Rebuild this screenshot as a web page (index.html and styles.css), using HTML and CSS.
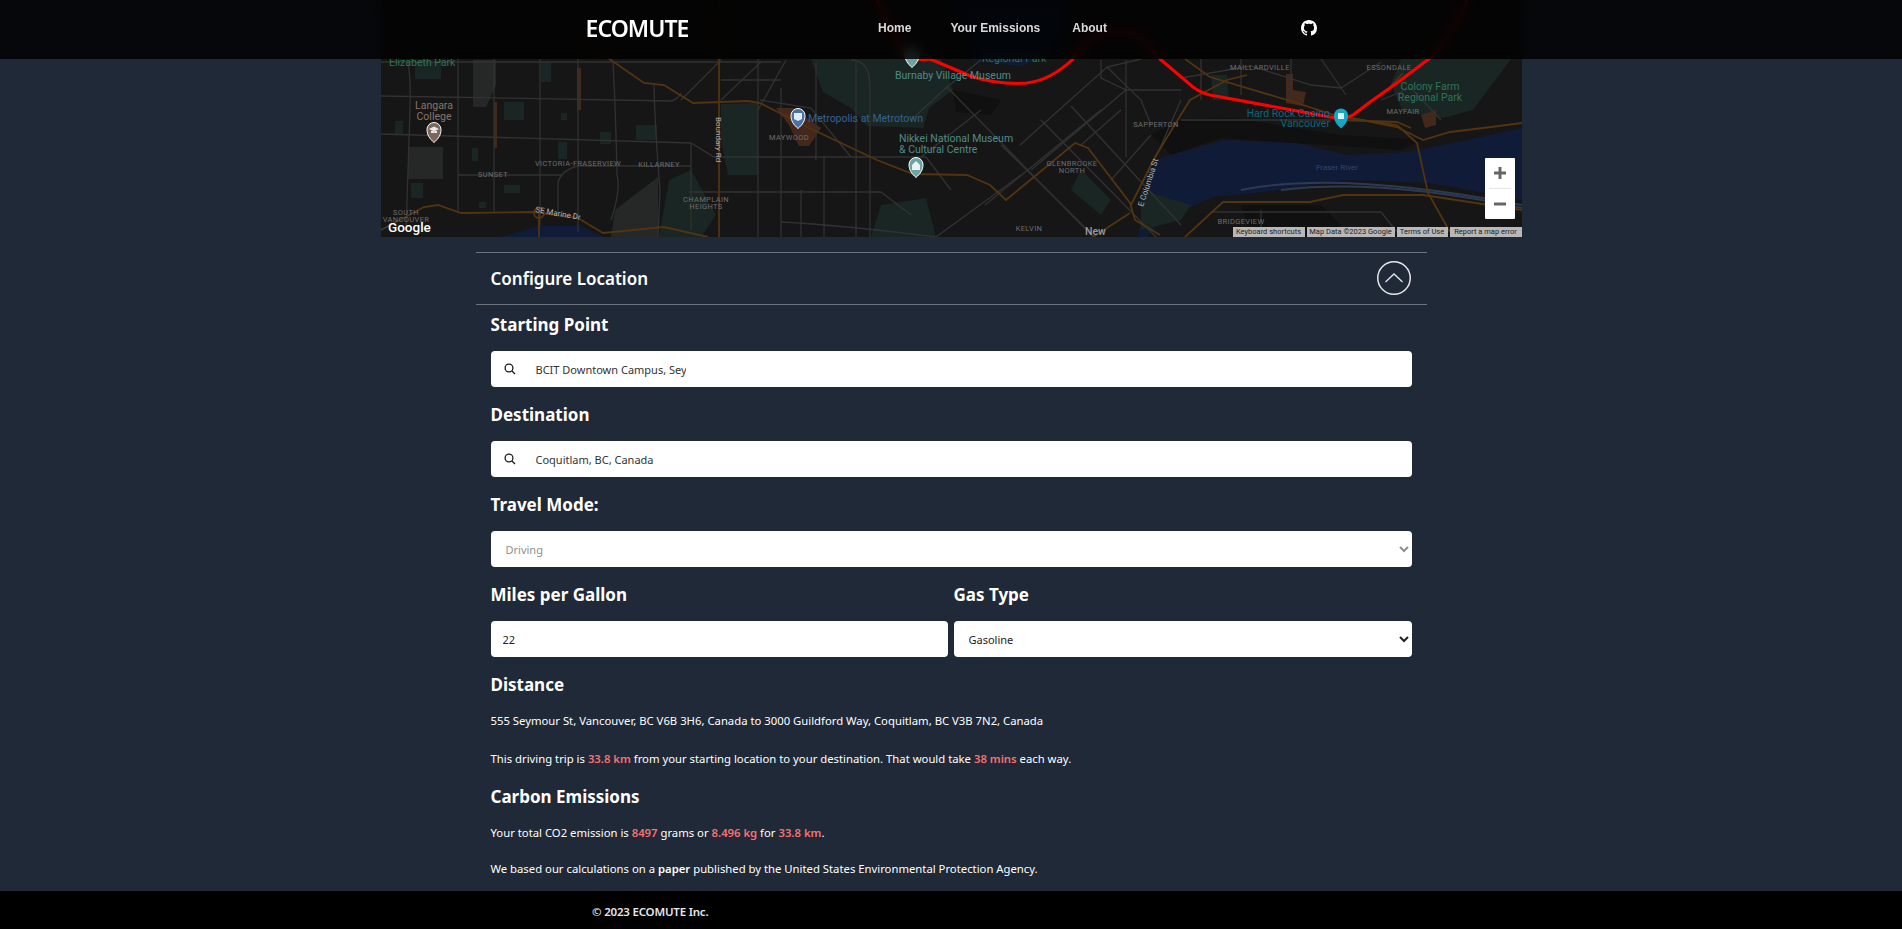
FILE: index.html
```html
<!DOCTYPE html>
<html>

<head>
  <title>ECOMUTE</title>
  <link rel="stylesheet" href="styles.css">
</head>

<body>
  <header class="topbar">
    <div class="topbar-inner">
      <a class="brand">ECOMUTE</a>
      <nav class="nav-links">
        <a class="nav-home">Home</a>
        <a>Your Emissions</a>
        <a>About</a>
      </nav>
      <a class="github-link">
        <svg viewBox="0 0 16 16" width="16" height="16">
          <path class="github-mark" d="M8 0C3.58 0 0 3.58 0 8c0 3.54 2.29 6.53 5.47 7.59.4.07.55-.17.55-.38 0-.19-.01-.82-.01-1.49-2.01.37-2.53-.49-2.69-.94-.09-.23-.48-.94-.82-1.13-.28-.15-.68-.52-.01-.53.63-.01 1.08.58 1.23.82.72 1.21 1.87.87 2.33.66.07-.52.28-.87.51-1.07-1.78-.2-3.64-.89-3.64-3.95 0-.87.31-1.59.82-2.15-.08-.2-.36-1.02.08-2.12 0 0 .67-.21 2.2.82.64-.18 1.32-.27 2-.27.68 0 1.36.09 2 .27 1.53-1.04 2.2-.82 2.2-.82.44 1.1.16 1.92.08 2.12.51.56.82 1.27.82 2.15 0 3.07-1.87 3.75-3.65 3.95.29.25.54.73.54 1.48 0 1.07-.01 1.93-.01 2.2 0 .21.15.46.55.38A8.013 8.013 0 0016 8c0-4.42-3.58-8-8-8z"/>
        </svg>
      </a>
    </div>
  </header>

  <!-- Map drawn by hand, coordinates are map pixels -->
  <section class="map">
    <svg class="map-art" viewBox="0 0 1141 237" width="1141" height="237">
      <defs>
        <path id="pinShape" d="M0 10.500 C-4.500 6.500 -7 3 -7 -2.500 A7 7 0 0 1 7 -2.500 C7 3 4.500 6.500 0 10.500 Z"/>
      </defs>

      <!-- water -->
      <path class="water" d="M757 237 L766 190 L774 160 L782 157 L842 140 L916 143 L966 155 L1026 152 L1086 140 L1141 128 L1141 200 L1049 183 L966 180 L882 192 L832 197 L782 220 L765 237 Z"/>
      <path class="water" d="M492 80 Q510 70 530 78 Q538 90 528 94 L500 92 Z"/>
      <path class="water" d="M575 0 L690 0 L680 50 L640 66 L590 60 Z"/>
      <path class="water" d="M120 237 L158 226 L200 226 L222 237 Z"/>

      <!-- parks -->
      <g class="park">
        <path d="M430 59 L560 59 L572 90 L548 108 L542 128 L486 126 L470 108 L442 92 Z"/>
        <path d="M1020 59 L1130 59 L1092 110 L1062 118 L1022 112 L1010 84 Z"/>
        <path d="M340 104 L377 103 L377 175 L347 175 L340 140 Z"/>
        <path d="M288 180 L310 170 L335 215 L320 237 L278 237 Z"/>
        <path d="M830 75 L846 75 L848 100 L832 100 Z"/>
        <path d="M760 190 L810 205 L800 220 L760 230 Z"/>
        <path d="M700 170 L730 200 L720 215 L690 190 Z"/>
        <path d="M500 205 L545 198 L555 237 L490 237 Z"/>
        <rect x="34" y="62" width="26" height="17"/>
        <rect x="123" y="102" width="20" height="18"/>
        <rect x="14" y="121" width="8" height="13"/>
        <rect x="177" y="142" width="9" height="17"/>
        <rect x="30" y="183" width="12" height="15"/>
        <rect x="123" y="185" width="16" height="8"/>
        <rect x="255" y="125" width="21" height="15"/>
        <rect x="180" y="113" width="6" height="7"/>
        <rect x="219" y="132" width="11" height="12"/>
        <rect x="91" y="148" width="6" height="13"/>
        <rect x="98" y="202" width="7" height="6"/>
        <rect x="160" y="62" width="10" height="20"/>
      </g>
      <g class="campus">
        <rect x="27" y="147" width="35" height="32"/>
        <path d="M92 60 L115 60 L115 85 L105 107 L92 107 Z"/>
        <path d="M234 210 L277 177 L277 237 L230 237 Z"/>
      </g>
      <path class="blocks" d="M770 135 L800 120 L850 118 L960 135 L1040 140 L1020 150 L900 142 L840 138 L790 155 Z"/>
      <path class="blocks" d="M860 205 L940 205 L960 225 L950 237 L870 237 Z"/>
      <path class="blocks" d="M572 90 L620 100 L610 115 L575 112 Z"/>

      <!-- orange building patches -->
      <g class="patch">
        <path d="M395 108 L412 108 L440 128 L428 146 L418 146 L408 125 Z"/>
        <path d="M905 74 L912 74 L912 90 L925 92 L922 106 L905 103 Z"/>
        <rect x="113" y="102" width="3" height="46"/>
        <rect x="196" y="68" width="4" height="42"/>
        <path d="M1040 115 L1055 110 L1055 125 L1044 128 Z"/>
      </g>

      <!-- streets -->
      <g class="road">
        <path d="M0 62 H400"/>
        <path d="M0 96 L290 101 Q296 100 300 93"/>
        <path d="M0 134 L310 143 L333 157 H545"/>
        <path d="M77 175 H180"/>
        <path d="M177 213 V183 Q180 170 197 166 H310"/>
        <path d="M27 62 Q30 80 29 110 L25 230"/>
        <path d="M77 59 V213"/>
        <path d="M113 59 V213"/>
        <path d="M159 59 V225"/>
        <path d="M197 59 V232"/>
        <path d="M232 62 Q235 120 236 175 Q240 190 230 220"/>
        <path d="M273 85 Q274 130 279 190 L277 237"/>
        <path d="M310 143 V230"/>
        <path d="M377 59 V237"/>
        <path d="M308 192 H500 L530 215"/>
        <path d="M340 80 H400 M400 88 V237 M435 62 V160 M443 157 V237 M475 62 V237 M420 190 V237"/>
        <path d="M340 60 L300 100 M380 62 L340 100 M377 110 L405 60"/>
        <path d="M379 100 L430 108 L470 157"/>
        <path d="M470 60 Q490 60 489 90 L489 237"/>
        <path d="M566 87 L712 237"/>
        <path d="M530 120 L566 87 M566 87 L600 60"/>
        <path d="M540 157 L600 110"/>
        <path d="M545 157 L570 190"/>
        <path d="M639 145 L726 67 L760 59"/>
        <path d="M690 106 L800 225"/>
        <path d="M650 170 L745 90 L800 90"/>
        <path d="M604 205 L720 110"/>
        <path d="M555 237 L640 175"/>
        <path d="M720 60 L720 78 L745 90 M745 60 V157"/>
        <path d="M660 120 L775 237"/>
        <path d="M620 145 L722 245"/>
        <path d="M726 67 L760 100 L770 125"/>
        <path d="M700 145 L740 110"/>
        <path d="M730 180 L770 135"/>
        <path d="M400 222 Q460 225 555 237"/>
        <path d="M800 120 L950 120"/>
        <path d="M820 59 V100 M860 59 V95 M910 59 V100 M940 59 L965 95"/>
        <path d="M800 78 L870 66 L930 85 L960 88 L1000 62"/>
        <path d="M1000 100 L1030 88 L1060 120"/>
        <path d="M800 100 L775 157"/>
        <path d="M830 212 H1000 M880 210 V237 M1000 212 L1020 237"/>
      </g>
      <path class="bridge" d="M860 190 Q960 170 1141 205"/>
      <path class="bridge" d="M900 190 Q1000 178 1141 208"/>

      <!-- highways -->
      <g class="highway">
        <path d="M0 230 L43 207 L57 205 L80 213 L153 212 L197 218 L222 233 L283 227 L327 237"/>
        <path d="M158 213 V237"/>
        <circle cx="158" cy="213" r="5"/>
        <path d="M190 30 L227 58 L263 83 L283 85 L312 103 L367 101 L379 103 L422 125 L496 160 L532 174 L586 175 L609 185 L625 200 L694 143 L707 148 L749 203 L754 220 L779 235"/>
        <path d="M749 213 L712 237"/>
        <path d="M338 0 V237"/>
        <path d="M804 59 L829 77 L916 103 L959 117 L1016 125 L1036 143 L1047 193 L1069 232"/>
        <path d="M774 157 L809 100 L846 80 L866 75"/>
        <path d="M804 237 L842 202 L929 202 L962 195 L1042 195 L1141 210"/>
        <path d="M966 117 L1016 127 L1042 140 L1069 132 L1102 128 L1141 123"/>
        <path d="M960 120 L1016 122 L1030 128"/>
        <path d="M1009 87 L1022 73"/>
        <path d="M774 157 L750 205"/>
      </g>

      <!-- driving route -->
      <path class="route" d="M496 0 Q510 30 525 53 Q535 62 549 59 L592 77 Q620 85 646 83 Q670 80 692 59 Q705 40 722 33 Q745 25 762 40 L779 59 L812 87 Q820 93 829 95 L949 117 Q962 120 972 115 L989 102 L1016 83 L1049 58 Q1072 35 1086 0"/>

      <!-- pins -->
      <use class="pin pin-school" href="#pinShape" x="53" y="132"/>
      <use class="pin pin-shop" href="#pinShape" x="417" y="118"/>
      <use class="pin pin-museum" href="#pinShape" x="535" y="167"/>
      <use class="pin pin-museum" href="#pinShape" x="531" y="57"/>
      <use class="pin-casino" href="#pinShape" x="960" y="118"/>
      <path class="pin-glyph" d="M48 129 L53 126.500 L58 129 L53 131.500 Z M50 131 V133 H56 V131 Z"/>
      <path class="pin-glyph" d="M413 113 H421 V119 L417 121 L413 119 Z"/>
      <path class="pin-glyph" d="M531 165 L535 161 L539 165 V170 H531 Z"/>
      <path class="pin-glyph" d="M957 113 H963 V119 H957 Z"/>

      <!-- labels -->
      <g class="label">
        <text class="lb-park" x="8" y="66">Elizabeth Park</text>
        <text class="lb-park" x="601" y="62">Regional Park</text>
        <text class="lb-park lb-mid" x="1049" y="90">Colony Farm</text>
        <text class="lb-park lb-mid" x="1049" y="101">Regional Park</text>
        <text class="lb-school lb-mid" x="53" y="109">Langara</text>
        <text class="lb-school lb-mid" x="53" y="120">College</text>
        <text class="lb-shop" x="427" y="122">Metropolis at Metrotown</text>
        <text class="lb-museum" x="518" y="142">Nikkei National Museum</text>
        <text class="lb-museum" x="518" y="153">&amp; Cultural Centre</text>
        <text class="lb-museum" x="514" y="79">Burnaby Village Museum</text>
        <text class="lb-casino lb-end" x="949" y="117">Hard Rock Casino</text>
        <text class="lb-casino lb-end" x="949" y="127">Vancouver</text>
        <text class="lb-river lb-mid" x="956" y="170">Fraser River</text>
        <text class="lb-area lb-mid" x="112" y="177">SUNSET</text>
        <text class="lb-area lb-mid" x="197" y="166">VICTORIA-FRASERVIEW</text>
        <text class="lb-area lb-mid" x="278" y="167">KILLARNEY</text>
        <text class="lb-area lb-mid" x="325" y="202">CHAMPLAIN</text>
        <text class="lb-area lb-mid" x="325" y="209">HEIGHTS</text>
        <text class="lb-area lb-mid" x="25" y="215">SOUTH</text>
        <text class="lb-area lb-mid" x="25" y="222">VANCOUVER</text>
        <text class="lb-area lb-mid" x="408" y="140">MAYWOOD</text>
        <text class="lb-area lb-mid" x="691" y="166">GLENBROOKE</text>
        <text class="lb-area lb-mid" x="691" y="173">NORTH</text>
        <text class="lb-area lb-mid" x="648" y="231">KELVIN</text>
        <text class="lb-area lb-mid" x="775" y="127">SAPPERTON</text>
        <text class="lb-area lb-mid" x="879" y="70">MAILLARDVILLE</text>
        <text class="lb-area lb-mid" x="1008" y="70">ESSONDALE</text>
        <text class="lb-area lb-mid" x="1022" y="114">MAYFAIR</text>
        <text class="lb-area lb-mid" x="860" y="224">BRIDGEVIEW</text>
        <text class="lb-town" x="704" y="235">New</text>
        <text class="lb-street" transform="translate(154 212) rotate(10)">SE Marine Dr</text>
        <text class="lb-street" transform="translate(335 117) rotate(90)">Boundary Rd</text>
        <text class="lb-street" transform="translate(762 207) rotate(-72)">E Columbia St</text>
        <text class="lb-logo" x="7" y="232">Google</text>
      </g>
    </svg>

    <div class="zoom-box">
      <span class="zoom-btn">
        <svg viewBox="0 0 18 18" width="18" height="18"><path class="zoom-sign" d="M3 9 H15 M9 3 V15"/></svg>
      </span>
      <span class="zoom-btn">
        <svg viewBox="0 0 18 18" width="18" height="18"><path class="zoom-sign" d="M3 9 H15"/></svg>
      </span>
    </div>

    <div class="map-credits">
      <span class="credit-keys">Keyboard shortcuts</span>
      <span class="credit-data">Map Data ©2023 Google</span>
      <span class="credit-terms">Terms of Use</span>
      <span class="credit-report">Report a map error</span>
    </div>
  </section>

  <main class="panel">
    <div class="panel-head">
      <h2>Configure Location</h2>
      <span class="collapse-btn">
        <svg viewBox="0 0 34 34" width="34" height="34">
          <circle class="collapse-ring" cx="17" cy="17" r="16.250"/>
          <path class="collapse-chevron" d="M8.500 21 L17 13 L25.500 21"/>
        </svg>
      </span>
    </div>

    <div class="fields">
      <h3 class="first">Starting Point</h3>
      <div class="search-box">
        <svg class="search-icon" viewBox="0 0 12 12" width="12" height="12">
          <circle cx="5" cy="5" r="3.900"/>
          <path d="M8 8 L11 11"/>
        </svg>
        <input class="place-input" type="text" value="BCIT Downtown Campus, Seymour Street, Vancouver, BC, Canada">
      </div>

      <h3>Destination</h3>
      <div class="search-box">
        <svg class="search-icon" viewBox="0 0 12 12" width="12" height="12">
          <circle cx="5" cy="5" r="3.900"/>
          <path d="M8 8 L11 11"/>
        </svg>
        <input class="place-input" type="text" value="Coquitlam, BC, Canada">
      </div>

      <h3>Travel Mode:</h3>
      <select class="picker" disabled>
        <option>Driving</option>
      </select>

      <div class="two-col">
        <div>
          <h3>Miles per Gallon</h3>
          <input class="mpg-input" type="text" value="22">
        </div>
        <div>
          <h3>Gas Type</h3>
          <select class="picker">
            <option>Gasoline</option>
          </select>
        </div>
      </div>

      <h3>Distance</h3>
      <p class="gap-18">555 Seymour St, Vancouver, BC V6B 3H6, Canada to 3000 Guildford Way, Coquitlam, BC V3B 7N2, Canada</p>
      <p>This driving trip is <strong>33.8 km</strong> from your starting location to your destination. That would take <strong>38 mins</strong> each way.</p>

      <h3>Carbon Emissions</h3>
      <p class="gap-16">Your total CO2 emission is <strong>8497</strong> grams or <strong>8.496 kg</strong> for <strong>33.8 km</strong>.</p>
      <p>We based our calculations on a <a class="paper-link">paper</a> published by the United States Environmental Protection Agency.</p>
    </div>
  </main>

  <footer class="site-footer">
    <div class="footer-inner">© 2023 ECOMUTE Inc.</div>
  </footer>
</body>

</html>
```

FILE: styles.css
```css
/* Reset default margin and padding for body */
body {
  margin: 0;
  padding: 0;
  background-color: #1f2937;
  color: #fff;
  font-family: 'Noto Sans', sans-serif;
  min-height: 929px;
  display: flex;
  flex-direction: column;
}

/* Top bar sits over the map */
.topbar {
  position: fixed;
  top: 0;
  left: 0;
  right: 0;
  height: 59px;
  z-index: 10;
  background-color: rgba(0, 0, 0, 0.82);
  backdrop-filter: blur(6px);
}

.topbar-inner {
  width: 731px;
  height: 100%;
  box-sizing: border-box;
  padding-bottom: 3px;
  margin: 0 auto;
  display: flex;
  align-items: center;
  justify-content: space-between;
}

.brand {
  font-size: 23px;
  font-weight: 600;
  letter-spacing: -0.950px;
}

.nav-links {
  display: flex;
  gap: 32px;
  margin-right: 4px;
  font-family: 'Liberation Sans', sans-serif;
  font-size: 12px;
  font-weight: bold;
  color: #d9d9d9;
}

.nav-home {
  margin-right: 7px;
}

.github-link {
  display: flex;
}

.github-mark {
  fill: #fff;
}

/* Map */
.map {
  position: relative;
  width: 1141px;
  height: 237px;
  margin: 0 auto;
  background-color: #161616;
  flex: none;
}

.map-art {
  display: block;
}

.water { fill: #101c37; }
.park { fill: #192624; }
.campus { fill: #252827; }
.blocks { fill: #101010; }
.patch { fill: #44291b; }

.road {
  fill: none;
  stroke: #323232;
  stroke-width: 1.300;
}

.bridge {
  fill: none;
  stroke: #2d3a52;
  stroke-width: 2;
}

.highway {
  fill: none;
  stroke: #523410;
  stroke-width: 1.800;
}

.route {
  fill: none;
  stroke: #ff0000;
  stroke-width: 3;
  stroke-linejoin: round;
}

.pin {
  stroke: #fff;
  stroke-width: 1;
}

.pin-school { fill: #79685b; }
.pin-shop { fill: #4a71a8; }
.pin-museum { fill: #6ba5a3; }
.pin-casino { fill: #17a6c4; }
.pin-glyph { fill: #fff; opacity: 0.85; }

.label text {
  font-family: Roboto, sans-serif;
  font-size: 10.500px;
}

.label .lb-mid { text-anchor: middle; }
.label .lb-end { text-anchor: end; }
.label .lb-park { fill: #2d7555; }
.label .lb-school { fill: #8a7465; }
.label .lb-shop { fill: #366391; }
.label .lb-museum { fill: #4f8b89; }
.label .lb-casino { fill: #08687b; }
.label .lb-river { fill: #2e4679; font-size: 8px; }
.label .lb-area { fill: #6e6e6e; font-size: 7.500px; letter-spacing: 0.350px; }
.label .lb-street { fill: #b0b0b0; font-size: 8px; }
.label .lb-town { fill: #9a9a9a; font-size: 10.500px; font-weight: 500; }
.label .lb-logo { fill: #fff; font-size: 13.500px; font-weight: 500; }

.zoom-box {
  position: absolute;
  left: 1104px;
  top: 158px;
  width: 30px;
  height: 61px;
  background-color: #fff;
  border-radius: 1px;
  display: flex;
  flex-direction: column;
}

.zoom-btn {
  flex: 1;
  display: flex;
  align-items: center;
  justify-content: center;
}

.zoom-btn + .zoom-btn {
  border-top: 1px solid #e6e6e6;
  margin: 0 4px;
}

.zoom-sign {
  fill: none;
  stroke: #666;
  stroke-width: 3;
}

.map-credits {
  position: absolute;
  left: 852px;
  right: 0;
  bottom: 0;
  height: 10px;
  display: flex;
  gap: 2px;
  font-family: Roboto, sans-serif;
  font-size: 7.500px;
  line-height: 10px;
  color: #222;
}

.map-credits span {
  background-color: #b8b8b8;
  text-align: center;
  white-space: nowrap;
  overflow: hidden;
}

.credit-keys { width: 72px; }
.credit-data { width: 88px; }
.credit-terms { width: 51px; }
.credit-report { flex: 1; }

/* Configure panel */
.panel {
  width: 951px;
  margin: 15px auto 0;
  flex: none;
}

.panel-head {
  height: 51px;
  border-top: 1px solid #6b7280;
  border-bottom: 1px solid #6b7280;
  padding: 0 15px;
  display: flex;
  align-items: center;
  justify-content: space-between;
}

h2 {
  margin: 0;
  font-size: 17px;
  font-weight: 600;
}

.collapse-btn {
  display: flex;
  margin: 0 1px 2px 0;
}

.collapse-ring {
  fill: none;
  stroke: #e5e7eb;
  stroke-width: 1.500;
}

.collapse-chevron {
  fill: none;
  stroke: #e5e7eb;
  stroke-width: 1.300;
}

.fields {
  padding: 0 15px;
}

h3 {
  margin: 14px 0 12px;
  font-size: 17px;
  font-weight: 700;
  line-height: 28px;
}

h3.first {
  margin-top: 6px;
}

/* Search inputs */
.search-box {
  height: 36px;
  background-color: #fff;
  border-radius: 4px;
  display: flex;
  align-items: center;
  gap: 20px;
  padding-left: 13px;
}

.search-icon {
  flex: none;
  fill: none;
  stroke: #1a1a1a;
  stroke-width: 1.300;
}

.place-input {
  width: 150px;
  padding: 0;
  border: none;
  outline: none;
  background: transparent;
  font-family: 'Noto Sans', sans-serif;
  font-size: 11px;
  color: #333;
}

.picker,
.mpg-input {
  display: block;
  width: 100%;
  height: 36px;
  box-sizing: border-box;
  border: none;
  outline: none;
  border-radius: 4px;
  background-color: #fff;
  font-family: 'Noto Sans', sans-serif;
  font-size: 11px;
  color: #222;
}

.picker {
  padding-left: 11px;
}

.picker:disabled {
  color: #8f8f8f;
  opacity: 1;
}

.mpg-input {
  padding: 0 12px;
}

.two-col {
  display: grid;
  grid-template-columns: 457px 458px;
  gap: 6px;
}

/* Result text */
p {
  margin: 0;
  font-size: 11.300px;
  line-height: 20px;
}

.gap-18 { margin-bottom: 18px; }
.gap-16 { margin-bottom: 16px; }

strong {
  font-weight: 600;
  color: #f87171;
}

.paper-link {
  font-weight: 600;
}

/* Footer */
.site-footer {
  margin-top: auto;
  height: 38px;
  box-sizing: border-box;
  padding-top: 3px;
  background-color: #000;
  flex: none;
  display: flex;
  align-items: center;
}

.footer-inner {
  padding-left: 592px;
  font-size: 11.500px;
  font-weight: 600;
  letter-spacing: -0.2px;
  color: #e5e7eb;
}
```
